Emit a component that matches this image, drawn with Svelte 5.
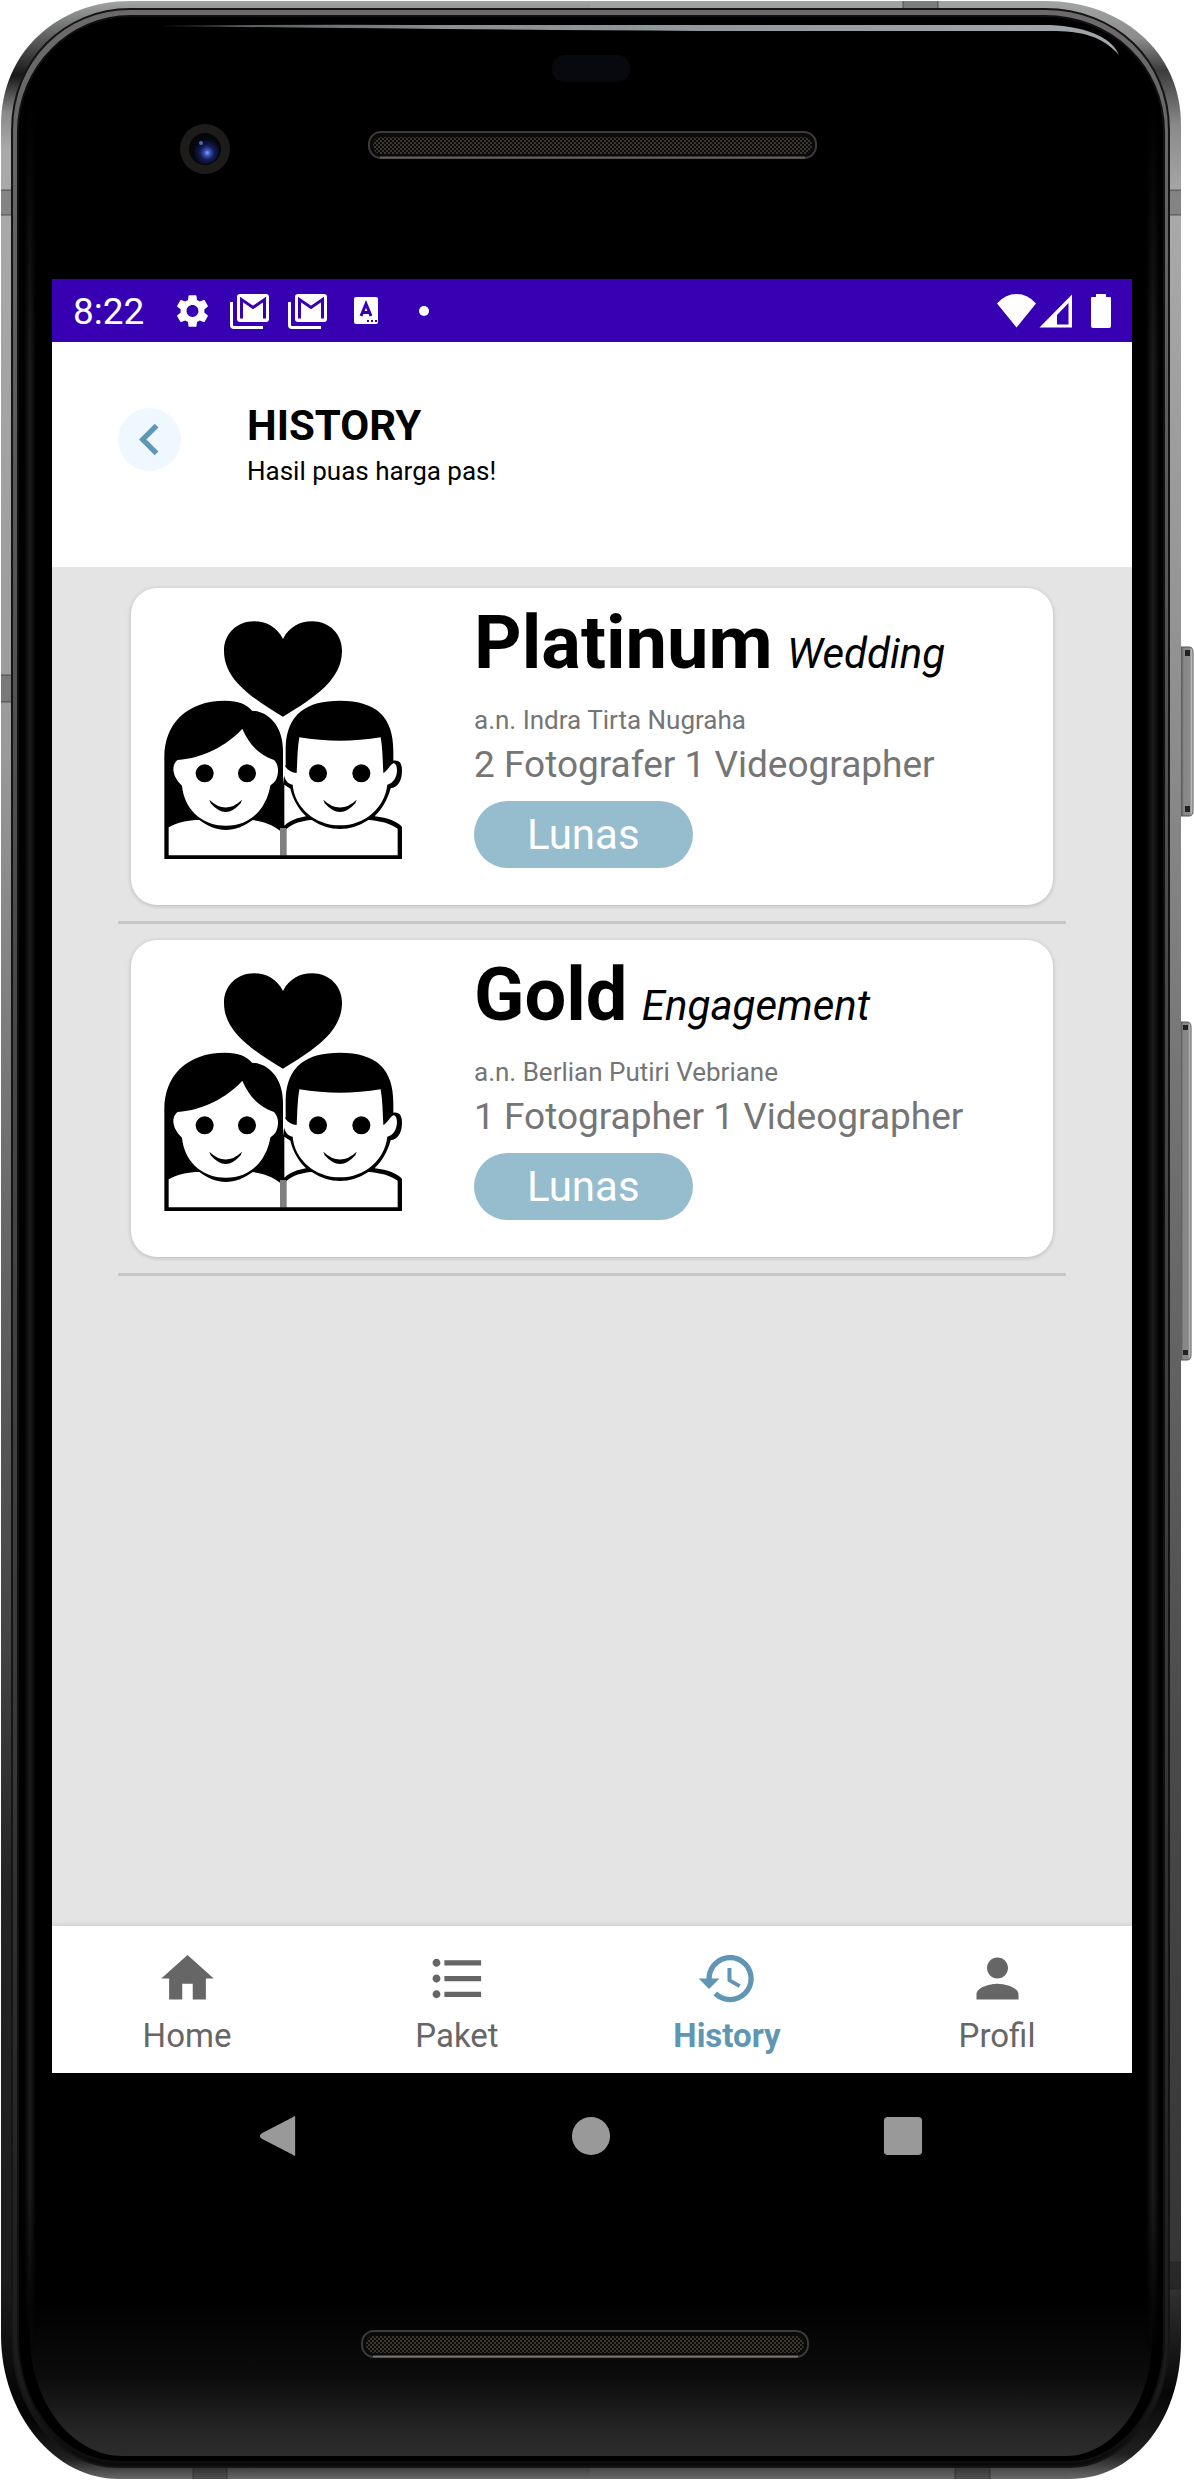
<script>
  const orders = [
    { name: 'Platinum', kind: 'Wedding', client: 'a.n. Indra Tirta Nugraha', crew: '2 Fotografer 1 Videographer', status: 'Lunas' },
    { name: 'Gold', kind: 'Engagement', client: 'a.n. Berlian Putiri Vebriane', crew: '1 Fotographer 1 Videographer', status: 'Lunas' }
  ];

  const tabs = [
    { label: 'Home', icon: 'M10 20v-6h4v6h5v-8h3L12 3 2 12h3v8z' },
    {
      label: 'Paket',
      icon: 'M4 10.5c-.83 0-1.5.67-1.5 1.5s.67 1.5 1.5 1.5 1.5-.67 1.5-1.5-.67-1.5-1.5-1.5zm0-6c-.83 0-1.5.67-1.5 1.5S3.17 7.5 4 7.5 5.5 6.83 5.5 6 4.83 4.5 4 4.5zm0 12c-.83 0-1.5.68-1.5 1.5s.68 1.5 1.5 1.5 1.5-.68 1.5-1.5-.67-1.5-1.5-1.5zM7 19h14v-2H7v2zm0-6h14v-2H7v2zm0-8v2h14V5H7z'
    },
    {
      label: 'History',
      active: true,
      icon: 'M13 3c-4.97 0-9 4.03-9 9H1l3.89 3.89.07.14L9 12H6c0-3.87 3.13-7 7-7s7 3.13 7 7-3.13 7-7 7c-1.93 0-3.68-.79-4.94-2.06l-1.42 1.42C8.27 19.99 10.51 21 13 21c4.97 0 9-4.03 9-9s-4.03-9-9-9zm-1 5v5l4.28 2.54.72-1.21-3.5-2.08V8H12z'
    },
    { label: 'Profil', icon: 'M12 12c2.21 0 4-1.79 4-4s-1.79-4-4-4-4 1.79-4 4 1.79 4 4 4zm0 2c-2.67 0-8 1.34-8 4v2h16v-2c0-2.66-5.33-4-8-4z' }
  ];
</script>

{#snippet mail()}
  <svg class="mail" viewBox="0 0 39 36" aria-hidden="true">
    <path d="M1.500 9v23q0 2.500 2.500 2.500h29" fill="none" stroke="#fff" stroke-width="3" />
    <rect x="7" y="1" width="32" height="28" rx="3" fill="#fff" />
    <path d="M11.500 25.500V6.500L23 14.500L34.500 6.500V25.500" fill="none" stroke="#3700b3" stroke-width="3" />
  </svg>
{/snippet}

<div class="phone">
  <svg class="shell" viewBox="0 0 1194 2480" preserveAspectRatio="none" aria-hidden="true">
    <defs>
      <linearGradient id="metalL" x2="0" y2="1">
        <stop offset="0" stop-color="#a2a4a4" />
        <stop offset=".018" stop-color="#505050" />
        <stop offset=".03" stop-color="#181818" />
        <stop offset=".045" stop-color="#8a8a8a" />
        <stop offset=".06" stop-color="#aaa" />
        <stop offset=".3" stop-color="#9a9a9a" />
        <stop offset=".5" stop-color="#666" />
        <stop offset=".66" stop-color="#444" />
        <stop offset=".76" stop-color="#242424" />
        <stop offset=".92" stop-color="#1c1c1c" />
        <stop offset=".975" stop-color="#020202" />
        <stop offset=".992" stop-color="#202020" />
        <stop offset="1" stop-color="#686868" />
      </linearGradient>
      <linearGradient id="metalR" x2="0" y2="1">
        <stop offset="0" stop-color="#a2a4a4" />
        <stop offset=".015" stop-color="#8c8c8c" />
        <stop offset=".028" stop-color="#3c3c3c" />
        <stop offset=".05" stop-color="#8a8a8a" />
        <stop offset=".08" stop-color="#aaa" />
        <stop offset=".25" stop-color="#949494" />
        <stop offset=".5" stop-color="#6a6a6a" />
        <stop offset=".7" stop-color="#4a4a4a" />
        <stop offset=".92" stop-color="#343434" />
        <stop offset=".965" stop-color="#060606" />
        <stop offset=".99" stop-color="#202020" />
        <stop offset="1" stop-color="#686868" />
      </linearGradient>
      <linearGradient id="rim" x2="0" y2="1">
        <stop offset="0" stop-color="#6c6a6a" />
        <stop offset=".4" stop-color="#484848" />
        <stop offset=".7" stop-color="#383838" />
        <stop offset=".97" stop-color="#1a1a1a" />
        <stop offset="1" stop-color="#0a0a0a" />
      </linearGradient>
      <linearGradient id="sheen">
        <stop offset="0" stop-color="#1c1c1c" stop-opacity="0" />
        <stop offset=".5" stop-color="#1c1c1c" />
        <stop offset="1" stop-color="#1c1c1c" stop-opacity="0" />
      </linearGradient>
      <linearGradient id="sheenEnds" x2="0" y2="1">
        <stop offset="0" stop-color="#000" />
        <stop offset=".12" stop-color="#fff" />
        <stop offset=".93" stop-color="#fff" />
        <stop offset="1" stop-color="#000" />
      </linearGradient>
      <mask id="sheenMask" maskUnits="userSpaceOnUse" x="0" y="100" width="1194" height="2250">
        <rect y="100" width="1194" height="2250" fill="url(#sheenEnds)" />
      </mask>
      <linearGradient id="fade" x2="0" y2="1">
        <stop offset="0" stop-color="#000" />
        <stop offset=".5" stop-color="#0c0c0c" />
        <stop offset=".85" stop-color="#262626" />
        <stop offset="1" stop-color="#2c2c2c" />
      </linearGradient>
      <linearGradient id="gloss">
        <stop offset="0" stop-color="#869090" stop-opacity=".5" />
        <stop offset=".3" stop-color="#879192" />
        <stop offset="1" stop-color="#a0a8aa" />
      </linearGradient>
      <linearGradient id="key">
        <stop offset="0" stop-color="#444" />
        <stop offset=".3" stop-color="#888" />
        <stop offset=".75" stop-color="#888" />
        <stop offset="1" stop-color="#ddd" />
      </linearGradient>
      <radialGradient id="lens" cx=".58" cy=".6" r=".5">
        <stop offset="0" stop-color="#8aa6ee" />
        <stop offset=".2" stop-color="#3b57bc" />
        <stop offset=".5" stop-color="#141d56" />
        <stop offset="1" stop-color="#05060e" />
      </radialGradient>
      <pattern id="mesh" width="4" height="4" patternUnits="userSpaceOnUse">
        <rect width="4" height="4" fill="#0c0b0a" />
        <rect width="2" height="2" fill="#3a3630" />
        <rect x="2" y="2" width="2" height="2" fill="#3a3630" />
      </pattern>
      <clipPath id="left"><rect width="590" height="2480" /></clipPath>
      <clipPath id="right"><rect x="590" width="604" height="2480" /></clipPath>
      <path id="body" d="M130 1H1045C1120 1 1181 50 1181 125V2340C1181 2425 1130 2479 1070 2479H118C55 2479 1 2415 1 2335V125C1 50 60 1 130 1Z" />
      <clipPath id="bodyClip"><use href="#body" /></clipPath>
    </defs>

    <path d="M1180 647h9q4 0 4 5v159q0 5-4 5h-9z" fill="url(#key)" stroke="#555" stroke-width="1" />
    <path d="M1180 1022h7q4 0 4 5v328q0 5-4 5h-7z" fill="url(#key)" stroke="#555" stroke-width="1" />
    <path d="M1185 650h5v6h-5zM1185 806h5v6h-5zM1183 1025h5v5h-5zM1183 1350h5v5h-5z" fill="#222" />

    <use href="#body" fill="url(#metalL)" clip-path="url(#left)" />
    <use href="#body" fill="url(#metalR)" clip-path="url(#right)" />
    <g clip-path="url(#bodyClip)" fill="#000" fill-opacity=".22" stroke="#222" stroke-opacity=".6">
      <path d="M0 190h18v25H0zM0 675h18v27H0zM1165 190h18v25h-18zM1165 2262h18v27h-18zM903 0h35v16h-35zM193 2464h34v16h-34zM955 2464h35v16h-35z" />
    </g>
    <path d="M130 9H1045C1115 9 1169 60 1169 130V2340C1169 2415 1120 2467 1070 2467H118C62 2467 12 2415 12 2335V130C12 60 65 9 130 9Z" fill="url(#rim)" stroke="#151515" stroke-width="2" />
    <path d="M130 16H1045C1110 16 1164 65 1164 132V2340C1164 2412 1118 2462 1070 2462H118C66 2462 18 2412 18 2335V132C18 65 72 16 130 16Z" fill="#000" stroke="#101014" stroke-width="2" />
    <path d="M30 2300H1152V2340C1152 2405 1112 2456 1066 2456H122C74 2456 30 2405 30 2335Z" fill="url(#fade)" />
    <g mask="url(#sheenMask)">
      <rect x="24" y="100" width="12" height="2250" fill="url(#sheen)" />
      <rect x="1146" y="100" width="14" height="2250" fill="url(#sheen)" />
    </g>
    <path d="M160 26Q300 24 420 25H1050C1092 27 1113 40 1119 55C1102 36 1082 31 1050 31H700Q400 29 160 26Z" fill="url(#gloss)" />

    <rect x="552" y="55" width="78" height="27" rx="13" fill="#08090e" />
    <circle cx="205" cy="149" r="25" fill="#1e1b1b" />
    <circle cx="205" cy="149" r="16" fill="#060608" />
    <circle cx="205" cy="150" r="14" fill="url(#lens)" />
    <circle cx="201" cy="143" r="2" fill="#4a68c8" />

    <g stroke-width="2">
      <rect x="369" y="132" width="447" height="26" rx="12" fill="#0a0a0a" stroke="#3c3a3a" />
      <rect x="373" y="137" width="439" height="17" rx="8" fill="url(#mesh)" />
      <path d="M380 157.500H805" stroke="#625f5c" />
      <rect x="362" y="2331" width="446" height="26" rx="12" fill="#0a0a0a" stroke="#3c3a3a" />
      <rect x="366" y="2336" width="438" height="17" rx="8" fill="url(#mesh)" />
      <path d="M373 2356.500H798" stroke="#77726f" />
    </g>
  </svg>

  <div class="screen">
    <div class="status">
      <span class="clock">8:22</span>
      <svg class="gear" viewBox="2 2 20 20" aria-hidden="true">
        <path fill="#fff" d="M19.140 12.940c.04-.3.06-.61.06-.94 0-.32-.02-.64-.07-.94l2.030-1.580c.18-.14.23-.41.12-.61l-1.920-3.320c-.12-.22-.37-.29-.59-.22l-2.390.96c-.5-.38-1.030-.7-1.620-.94l-.36-2.540c-.04-.24-.24-.41-.48-.41h-3.840c-.24 0-.43.17-.47.41l-.36 2.540c-.59.24-1.130.57-1.620.94l-2.390-.96c-.22-.08-.47 0-.59.22L2.740 8.870c-.12.21-.08.47.12.61l2.030 1.580c-.05.3-.09.63-.09.94s.02.64.07.94l-2.030 1.580c-.18.14-.23.41-.12.61l1.920 3.320c.12.22.37.29.59.22l2.390-.96c.5.38 1.030.7 1.620.94l.36 2.540c.05.24.24.41.48.41h3.840c.24 0 .44-.17.47-.41l.36-2.540c.59-.24 1.130-.56 1.620-.94l2.390.96c.22.08.47 0 .59-.22l1.920-3.320c.12-.22.07-.47-.12-.61l-2.010-1.580zM12 15.600c-1.980 0-3.600-1.620-3.600-3.600s1.620-3.600 3.600-3.600 3.600 1.620 3.600 3.600-1.620 3.600-3.600 3.600z" />
      </svg>
      {@render mail()}
      {@render mail()}
      <svg class="square-a" viewBox="0 0 24 27" aria-hidden="true">
        <rect width="24" height="27" rx="2" fill="#fff" />
        <path d="M7 19L12 7L17 19M9 15.500h6" fill="none" stroke="#3700b3" stroke-width="3" />
        <path d="M13 23h2v2h-2zM17 23h2v2h-2zM21 23h2v2h-2z" fill="#3700b3" />
      </svg>
      <span class="dot"></span>
      <svg class="signals" viewBox="0 0 114 34" aria-hidden="true">
        <g fill="#fff">
          <path d="M0 9.500Q8 0 19.500 0T39 9.500L19.500 33.500Z" />
          <path fill-rule="evenodd" d="M42.500 33.500L75 0.500V33.500ZM60 30.500H71.500V9L60 21Z" />
          <path d="M94 4q0-1 1-1h4V0h10v3h4q1 0 1 1v28q0 2-2 2H96q-2 0-2-2z" />
        </g>
      </svg>
    </div>

    <header>
      <button class="back" aria-label="Back">
        <svg viewBox="0 0 24 24" aria-hidden="true"><path fill="#5f96b4" d="M15.410 16.590L10.830 12l4.580-4.590L14 6l-6 6 6 6z" /></svg>
      </button>
      <div>
        <h1>HISTORY</h1>
        <p>Hasil puas harga pas!</p>
      </div>
    </header>

    <main>
      {#each orders as order}
        <article>
          <svg class="couple" viewBox="162 151 714 714" role="img" aria-label="Couple with heart">
            <path d="M519 205C500 168 468 152 432 152C380 152 342 190 342 240C342 325 420 378 519 438C618 378 696 325 696 240C696 190 658 152 606 152C570 152 538 168 519 205Z" />
            <path d="M163 865V560C163 460 230 390 345 390C385 390 410 400 426 420C480 424 519 470 519 540V865Z" />
            <path d="M519 865V640L527 580V530C530 430 590 390 690 390C800 390 850 440 850 540V570C866 568 876 575 876 600C876 632 862 650 842 653C832 690 815 716 794 737C835 742 860 752 876 768V865Z" />
            <g fill="#fff">
              <path d="M203 568C280 562 350 525 397 474C415 515 440 550 492 568C504 580 508 600 500 622C496 636 484 640 481 645C470 710 425 765 348 765C270 765 222 710 216 645C200 630 192 615 190 598C190 582 195 574 203 568Z" />
              <path d="M176 770C203 754 235 748 268 748C320 788 375 788 428 748C460 752 488 762 510 780V854H176Z" />
              <path d="M568 500C650 514 730 514 812 500C818 535 818 570 820 607C834 600 840 582 850 578C866 576 868 634 832 642C824 712 764 764 690 764C616 764 554 712 548 642C534 640 522 628 520 600L526 588C536 600 546 606 560 607C562 570 562 535 568 500Z" />
              <path d="M523 642L541 654C550 690 566 715 588 737C560 742 540 750 523 765Z" />
              <path d="M529 775C550 758 575 750 605 748C660 784 720 784 775 748C810 750 840 758 863 774V854H529Z" />
            </g>
            <path d="M519 772V854" stroke="#808080" stroke-width="18" />
            <circle cx="284" cy="608" r="27" /><circle cx="411" cy="608" r="27" />
            <circle cx="624" cy="608" r="27" /><circle cx="754" cy="608" r="27" />
            <path d="M298 687Q347 734 396 687L392 698Q347 750 302 698Z" />
            <path d="M640 687Q690 734 740 687L736 698Q690 750 644 698Z" />
          </svg>
          <div class="details">
            <h2>{order.name} <em>{order.kind}</em></h2>
            <p class="client">{order.client}</p>
            <p class="crew">{order.crew}</p>
            <span class="badge">{order.status}</span>
          </div>
        </article>
        <hr />
      {/each}
    </main>

    <nav class="tabs" aria-label="Main">
      {#each tabs as tab}
        <a href="#{tab.label.toLowerCase()}" class:active={tab.active} aria-current={tab.active ? 'page' : undefined}>
          <svg viewBox="0 0 24 24" aria-hidden="true"><path fill="currentColor" d={tab.icon} /></svg>
          <span>{tab.label}</span>
        </a>
      {/each}
    </nav>
  </div>

  <div class="system">
    <button aria-label="Back"><svg viewBox="0 0 42 42" aria-hidden="true"><path fill="#999" d="M39 1V41Q39 43 37 41L4 24Q0 21 4 18L37 1Q39 -1 39 1Z" /></svg></button>
    <button aria-label="Home"><svg viewBox="0 0 42 42" aria-hidden="true"><circle cx="21" cy="21" r="20" fill="#999" /></svg></button>
    <button aria-label="Overview"><svg viewBox="0 0 42 42" aria-hidden="true"><rect x="1" y="1" width="40" height="40" rx="4" fill="#999" /></svg></button>
  </div>
</div>

<style>
  :global(body) {
    margin: 0;
    background: #fff;
  }

  .phone {
    position: relative;
    box-sizing: border-box;
    display: flex;
    flex-direction: column;
    min-height: 100vh;
    padding: 279px 62px 281px 52px;
    font-family: Roboto, "Liberation Sans", sans-serif;
    color: #000;
  }

  .shell {
    position: absolute;
    inset: 0;
    width: 100%;
    height: 100%;
  }

  .screen {
    position: relative;
    flex: 1;
    display: flex;
    flex-direction: column;
    background: #e4e4e4;
  }

  h1, h2, p {
    margin: 0;
  }

  button {
    border: 0;
    padding: 0;
    background: none;
  }

  svg {
    display: block;
  }

  .status {
    display: flex;
    align-items: center;
    height: 63px;
    padding: 0 21px;
    background: #3700b3;
    color: #fff;
  }

  .clock {
    font-size: 37px;
    line-height: 44px;
    padding-top: 2px;
    margin-right: 32px;
  }

  .gear {
    width: 33px;
    height: 34px;
    margin-right: 21px;
  }

  .mail {
    width: 39px;
    height: 36px;
    margin-right: 19px;
  }

  .square-a {
    width: 24px;
    height: 27px;
    margin-left: 8px;
  }

  .dot {
    width: 10px;
    height: 10px;
    margin-left: 41px;
    border-radius: 50%;
    background: #fff;
  }

  .signals {
    width: 114px;
    height: 34px;
    margin-left: auto;
  }

  header {
    display: flex;
    align-items: flex-start;
    padding: 66px 66px 78px;
    gap: 66px;
    background: #fff;
  }

  .back {
    width: 63px;
    height: 63px;
    border-radius: 50%;
    background: #f0f8ff;
  }

  .back svg {
    width: 63px;
    height: 63px;
  }

  h1 {
    font-size: 42px;
    line-height: 36px;
    font-weight: 700;
  }

  header p {
    padding-top: 9px;
    font-size: 26px;
    line-height: 36px;
  }

  main {
    flex: 1;
    padding: 21px 66px;
  }

  article {
    display: flex;
    align-items: flex-start;
    margin: 0 13px;
    border-radius: 26px;
    background: #fff;
    box-shadow: 0 1px 4px rgba(0, 0, 0, 0.2);
  }

  .couple {
    flex: none;
    width: 238px;
    height: 238px;
    margin: 33px 72px 46px 33px;
  }

  .details {
    flex: 1;
    padding-top: 11px;
  }

  h2 {
    font-size: 74px;
    line-height: 88px;
    font-weight: 700;
  }

  h2 em {
    margin-left: -4px;
    font-size: 42px;
    font-weight: 400;
    font-style: italic;
  }

  .client,
  .crew {
    color: #757575;
  }

  .client {
    padding-top: 4px;
    font-size: 26px;
    line-height: 36px;
  }

  .crew {
    padding-top: 2px;
    font-size: 37px;
    line-height: 50px;
  }

  .badge {
    display: inline-block;
    margin-top: 11px;
    padding: 9px 53px 8px;
    border-radius: 34px;
    background: #95bdce;
    color: #fff;
    font-size: 42px;
    line-height: 50px;
  }

  hr {
    height: 3px;
    margin: 16px 0;
    border: 0;
    background: #c6c6c6;
  }

  .tabs {
    display: grid;
    grid-template-columns: repeat(4, 1fr);
    background: #fff;
    box-shadow: 0 0 6px rgba(0, 0, 0, 0.15);
  }

  .tabs a {
    display: flex;
    flex-direction: column;
    align-items: center;
    padding: 21px 0 17px;
    color: #666;
    font-size: 33px;
    line-height: 40px;
    text-decoration: none;
  }

  .tabs svg {
    width: 63px;
    height: 63px;
    margin-bottom: 6px;
  }

  .tabs .active {
    color: #5f96b4;
    font-weight: 700;
  }

  .system {
    position: relative;
    display: flex;
    justify-content: space-between;
    align-items: center;
    height: 126px;
    padding: 0 209px 0 206px;
    background: #000;
  }

  .system svg {
    width: 40px;
    height: 40px;
  }
</style>
